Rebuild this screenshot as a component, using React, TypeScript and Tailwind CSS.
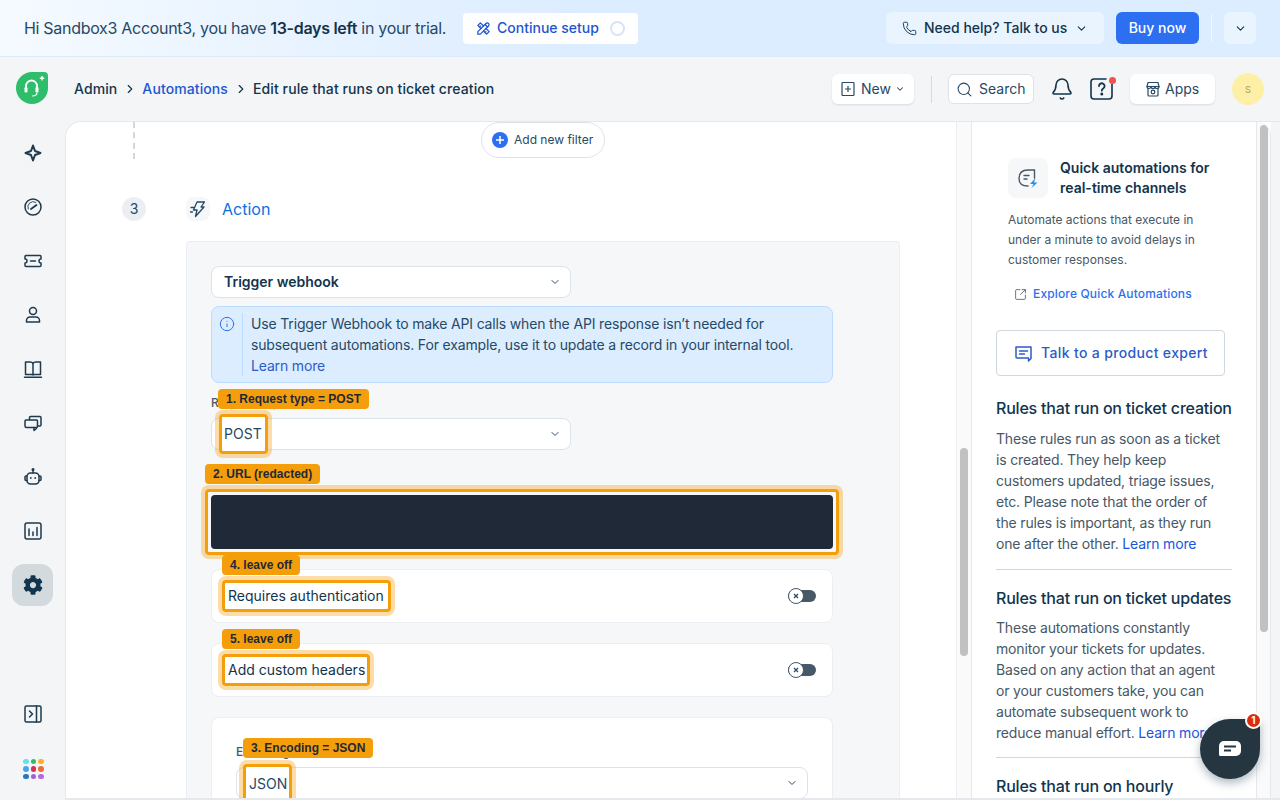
import React from "react";
import { Bell, ChevronDown, ChevronRight, Info, Phone, Search, SquareArrowOutUpRight } from "lucide-react";
import { FaCog } from "react-icons/fa";
import { TbTools } from "react-icons/tb";

const S = (p: React.SVGProps<SVGSVGElement>) => (
  <svg width="20" height="20" viewBox="0 0 20 20" fill="none" stroke="#1f3a4d" strokeWidth="1.5" strokeLinecap="round" strokeLinejoin="round" {...p} />
);

const SideIcons = [
  <S key="a"><path d="M10 2.5 L12 8 L17.5 10 L12 12 L10 17.5 L8 12 L2.5 10 L8 8 Z" strokeWidth="2" /></S>,
  <S key="b"><circle cx="10" cy="10" r="8" /><path d="M5.200 12a5.400 5.400 0 0 1 7.600-6.700" strokeWidth="0.900" /><path d="M8 12 L13.500 8" strokeWidth="1.800" /></S>,
  <S key="c"><path d="M3 4.500h14a1 1 0 0 1 1 1V8a2 2 0 0 0 0 4v2.500a1 1 0 0 1-1 1H3a1 1 0 0 1-1-1V12a2 2 0 0 0 0-4V5.500a1 1 0 0 1 1-1Z" /><path d="M7.500 10h5" /></S>,
  <S key="d"><circle cx="10" cy="6" r="3.500" /><path d="M3.500 17v-1.500a3.500 3.500 0 0 1 3.500-3.500h6a3.500 3.500 0 0 1 3.500 3.500V17Z" /></S>,
  <S key="e"><path d="M10 5v11M10 5a2.500 2.500 0 0 0-2.500-2H2.500v12.500H8a2 2 0 0 1 2 .5 2 2 0 0 1 2-.5h5.500V3h-5a2.500 2.500 0 0 0-2.500 2Z" /><path d="M1.500 18.300h17" /></S>,
  <S key="f"><path d="M6.500 6.500V4.500a1 1 0 0 1 1-1H17a1 1 0 0 1 1 1v7.500a1 1 0 0 1-1 1h-2.500" /><path d="M3 7h10.500a1 1 0 0 1 1 1v5.500a1 1 0 0 1-1 1H3.500a1.500 1.500 0 0 1-1.500-1.500V8a1 1 0 0 1 1-1Z" /><path d="M11 14.500v3l2.500-2" /></S>,
  <S key="g"><rect x="4" y="6" width="12" height="11" rx="3.500" /><path d="M10 6V3.500" /><circle cx="10" cy="2.500" r="0.800" fill="#1f3a4d" /><path d="M4 9H3a1 1 0 0 0-1 1v2.500a1 1 0 0 0 1 1h1M16 9h1a1 1 0 0 1 1 1v2.500a1 1 0 0 1-1 1h-1" /><circle cx="7.800" cy="11" r="0.900" fill="#1f3a4d" stroke="none" /><circle cx="12.200" cy="11" r="0.900" fill="#1f3a4d" stroke="none" /></S>,
  <S key="h"><rect x="2" y="2" width="16" height="16" rx="2" /><path d="M6 8v6.500M10 11v3.500M14 6.500v8" /></S>,
];

const Mark = ({ className, children }: { className: string; children?: React.ReactNode }) => (
  <div className={`absolute z-10 flex items-center rounded-[4px] border-[3px] border-[#f59e0b] bg-white shadow-[0_0_0_4px_rgba(245,158,11,0.35)] ${className}`}>{children}</div>
);

const Tag = ({ className, children }: { className: string; children: React.ReactNode }) => (
  <div className={`absolute z-20 flex h-5 items-center rounded-[4px] bg-[#f59e0b] px-2 font-['Liberation_Sans',sans-serif] text-xs font-bold whitespace-nowrap text-[#1f2937] ${className}`}>{children}</div>
);

const Toggle = () => (
  <div className="relative mr-[16px] h-[12px] w-[28px] rounded-full bg-[#475867]">
    <div className="absolute top-[-2px] left-0 flex h-4 w-4 items-center justify-center rounded-full border border-[#475867] bg-white text-[10px] leading-none text-[#264966]">
      <svg width="6" height="6" viewBox="0 0 6 6" stroke="#264966" strokeWidth="1.200"><path d="M1 1l4 4M5 1l-4 4" /></svg>
    </div>
  </div>
);

const Select = ({ className, children }: { className: string; children?: React.ReactNode }) => (
  <div className={`relative flex h-8 items-center justify-between rounded-lg border border-[#dde3e9] bg-white pr-[9px] pl-3 ${className}`}>
    {children}
    <ChevronDown size={12} strokeWidth={2} className="ml-auto text-[#264966]" />
  </div>
);

const ToggleRow = ({ label, tag, markW }: { label: string; tag: string; markW: string }) => (
  <div className="relative flex h-[54px] w-[622px] items-center justify-end rounded-lg border border-[#ebeff3] bg-white">
    <Tag className="top-[-15px] left-[10px] w-[78px]">{tag}</Tag>
    <Mark className={`top-[10px] left-[10px] h-[32px] pl-[3px] text-sm text-[#12344d] ${markW}`}>{label}</Mark>
    <Toggle />
  </div>
);

export default function App() {
  return (
    <div className="relative flex h-screen w-screen flex-col overflow-hidden bg-[#f3f5f7] font-['Inter',sans-serif] text-[#12344d]">
      {/* trial banner */}
      <div className="flex h-[57px] shrink-0 items-center border-b border-[#dbe9f6] bg-gradient-to-r from-[#f5faff] via-[#dcedff] via-45% to-[#dcedff] pr-6 pl-6">
        <span className="text-base tracking-[-0.3px] text-[#264966]">Hi Sandbox3 Account3, you have <b className="font-semibold text-[#12344d]">13-days left</b> in your trial.</span>
        <div className="ml-[17px] flex h-[31px] w-[175px] items-center rounded bg-white pl-[13px] text-sm font-medium text-[#1d55d0]">
          <TbTools size={15} className="text-[#1d55d0]" />
          <span className="ml-[6px]">Continue setup</span>
          <div className="ml-[11px] h-[15px] w-[15px] rounded-full border-[2.500px] border-[#d5e3f7]" />
        </div>
        <div className="ml-auto flex h-8 w-[218px] items-center rounded-md bg-[#e9f4ff] pl-4 text-sm font-medium text-[#12344d]">
          <Phone size={15} strokeWidth={1.5} />
          <span className="ml-[7px]">Need help? Talk to us</span>
          <ChevronDown size={13} strokeWidth={2} className="ml-[8px]" />
        </div>
        <div className="ml-3 flex h-8 w-[83px] items-center justify-center rounded-md bg-[#2c6ff0] text-sm font-medium text-white">Buy now</div>
        <div className="mx-3 h-7 w-px bg-[#eff6fd]" />
        <div className="flex h-8 w-8 items-center justify-center rounded-md bg-[#e9f4ff]"><ChevronDown size={13} strokeWidth={2} /></div>
      </div>

      {/* header */}
      <div className="flex h-[64px] shrink-0 items-center pr-4 pl-4">
        <svg width="32" height="32" viewBox="0 0 32 32" className="mb-[2px] shrink-0">
          <path d="M16 0H28a4 4 0 0 1 4 4V16A16 16 0 1 1 16 0Z" fill="#2ebd6b" />
          <path d="M10 17v-3a5.500 5.500 0 0 1 11 0v3" fill="none" stroke="#fff" strokeWidth="1.800" />
          <rect x="8.500" y="15" width="3" height="5.500" rx="1.300" fill="#fff" /><rect x="19.500" y="15" width="3" height="5.500" rx="1.300" fill="#fff" />
          <path d="M21 20.500c0 2.500-2.500 3.500-5 3.500" fill="none" stroke="#fff" strokeWidth="1.200" />
          <path d="M26 4v4.500M23.800 6.200h4.400" stroke="#fff" strokeWidth="1.400" />
        </svg>
        <div className="ml-[26px] flex items-center text-sm font-medium tracking-[0.1px]">
          <span>Admin</span>
          <ChevronRight size={14} strokeWidth={2} className="mx-[5.500px]" />
          <span className="text-[#1d55d0]">Automations</span>
          <ChevronRight size={14} strokeWidth={2} className="mx-[5.500px]" />
          <span>Edit rule that runs on ticket creation</span>
        </div>
        <div className="ml-auto flex h-[30px] w-[82px] items-center rounded-md bg-white pl-[9px] text-sm text-[#264966] shadow-[0_1px_2px_rgba(18,52,77,0.12)]">
          <svg width="14" height="16" viewBox="0 0 14 16" fill="none" stroke="#264966" strokeWidth="1.200"><rect x="1" y="1.500" width="12" height="13" rx="0.800" /><path d="M7 5v6M4 8h6" /></svg>
          <span className="ml-[6px]">New</span>
          <ChevronDown size={10} strokeWidth={2.500} className="ml-[4px]" />
        </div>
        <div className="mr-4 ml-[17px] h-[27px] w-px bg-[#d5dbe1]" />
        <div className="flex h-[30px] w-[86px] items-center rounded-md border border-[#dde3e9] bg-white pl-[7px] text-sm text-[#264966]">
          <Search size={17} strokeWidth={1.500} />
          <span className="ml-[6px]">Search</span>
        </div>
        <Bell size={24} strokeWidth={1.600} className="ml-4 text-[#12344d]" />
        <div className="relative ml-[15px] h-[26px] w-[26px]">
          <svg width="26" height="26" viewBox="0 0 26 26" fill="none" stroke="#12344d" strokeWidth="1.600" strokeLinecap="round">
            <path d="M17 3H5a3 3 0 0 0-3 3v14a3 3 0 0 0 3 3h15a3 3 0 0 0 3-3V8" />
            <path d="M10 10a2.800 2.800 0 1 1 4.200 2.500c-1 .6-1.400 1.100-1.400 2.200" strokeWidth="1.800" />
            <circle cx="12.800" cy="18" r="0.700" fill="#12344d" />
          </svg>
          <div className="absolute top-[1px] right-[-1px] h-[7px] w-[7px] rounded-full bg-[#f0534f]" />
        </div>
        <div className="ml-[15px] flex h-[30px] w-[85px] items-center rounded-md bg-white pl-4 text-sm text-[#264966] shadow-[0_1px_2px_rgba(18,52,77,0.12)]">
          <svg width="14" height="16" viewBox="0 0 14 16" fill="none" stroke="#264966" strokeWidth="1.200"><path d="M2 1.500h10l1 4H1Z" /><path d="M1 5.500a2 2 0 0 0 4 0 2 2 0 0 0 4 0 2 2 0 0 0 4 0" /><path d="M2 7.500V14a1 1 0 0 0 1 1h8a1 1 0 0 0 1-1V7.500" /><circle cx="7" cy="11" r="1.800" /></svg>
          <span className="ml-[5px]">Apps</span>
        </div>
        <div className="ml-[17px] flex h-8 w-8 items-center justify-center rounded-full bg-[#fdf0a6] text-xs text-[#b5ab76]">s</div>
      </div>

      {/* body */}
      <div className="flex min-h-0 flex-1">
        <div className="flex w-[65px] shrink-0 flex-col items-center pt-[22px]">
          {SideIcons.map((icon, i) => (
            <div key={i} className="mb-[34px] flex h-5 w-5 items-center justify-center">{icon}</div>
          ))}
          <div className="mt-[-11px] flex h-[42px] w-[41px] items-center justify-center rounded-xl bg-[#d3dade]"><FaCog size={20} className="text-[#12344d]" /></div>
          <div className="mt-auto mb-[76px] flex h-5 w-5 items-center justify-center">
            <S><rect x="2" y="2" width="16" height="16" rx="1.500" /><path d="M13.500 2v16M6.500 7l3 3-3 3" /></S>
          </div>
          <div className="absolute bottom-[21px] left-[23px] grid grid-cols-3 gap-[2px]">
            {["#5ee3f2", "#2ebd6b", "#fdb022", "#4aa3ec", "#d9304f", "#f26a2e", "#2c74c4", "#a25fd6", "#b868d9"].map((c) => (
              <div key={c} className="h-[5.500px] w-[5.500px] rounded-full" style={{ background: c }} />
            ))}
          </div>
        </div>

        {/* main */}
        <div className="flex min-w-0 flex-1 overflow-hidden rounded-tl-2xl border-t border-b-2 border-l border-[#e5e9ee] bg-white">
          <div className="w-[890px] shrink-0 overflow-hidden">
            <div className="relative flex h-[37px] items-start">
              <div className="ml-[67px] h-[37px] border-l-2 border-dashed border-[#cfd7df]" />
              <div className="absolute top-0 left-[415px] flex h-9 w-[124px] items-center rounded-full border border-[#dde3e9] bg-white pl-[10px] text-xs text-[#264966]">
                <div className="flex h-4 w-4 items-center justify-center rounded-full bg-[#2c6ff0]">
                  <svg width="10" height="10" viewBox="0 0 10 10" stroke="#fff" strokeWidth="1.500"><path d="M5 1v8M1 5h8" /></svg>
                </div>
                <span className="ml-[6px]">Add new filter</span>
              </div>
            </div>

            <div className="mt-[38px] flex h-6 items-center pl-[56px]">
              <div className="flex h-6 w-6 items-center justify-center rounded-full bg-[#ebeff3] text-sm text-[#264966]">3</div>
              <div className="ml-[40px] flex h-6 w-6 items-center justify-center rounded-lg bg-[#f5f7f9]">
                <svg width="18" height="18" viewBox="0 0 18 18" fill="none" stroke="#264966" strokeWidth="1.300" strokeLinejoin="round" strokeLinecap="round"><path d="M8 2h7.500l-3.500 5h3L6.500 16.500 8 10H4.500Z" /><path d="M2 7.500h3M1.500 12h2" /></svg>
              </div>
              <span className="ml-3 text-base text-[#0b72e0]">Action</span>
            </div>

            <div className="mt-5 ml-[120px] w-[714px] rounded-t border border-b-0 border-[#ebeff3] bg-[#f5f7f9] px-6 pt-6 text-sm">
              <Select className="w-[360px] font-semibold">Trigger webhook</Select>
              <div className="mt-2 flex h-[77px] w-[622px] rounded-lg border border-[#bbdcfe] bg-[#dcedff] py-[6px] pl-[7px] tracking-[-0.16px] text-[#264966]">
                <Info size={16} strokeWidth={1.500} className="mt-[3px] shrink-0 text-[#2c6ff0]" />
                <div className="ml-[7px] border-l border-[#bbdcfe] pl-2 leading-[21px]">
                  Use Trigger Webhook to make API calls when the API response isn’t needed for subsequent automations. For example, use it to update a record in your internal tool.{" "}
                  <span className="text-[#2c5cc5]">Learn more</span>
                </div>
              </div>

              <div className="relative mt-[11px] h-[18px] text-xs leading-[18px] font-medium text-[#475867]">
                Request type
                <Tag className="top-[-5px] left-[7px]">1. Request type = POST</Tag>
              </div>
              <Select className="mt-[6px] w-[360px]">
                <Mark className="top-[-5px] left-[7px] h-[40px] w-[49px] pl-[2px] text-[#264966]">POST</Mark>
              </Select>

              <div className="relative mt-[45px] h-[54px] w-[622px] rounded bg-[#1f2937]">
                <Tag className="top-[-31px] left-[-6px]">2. URL (redacted)</Tag>
                <div className="absolute -inset-[6px] rounded-[4px] border-[3px] border-[#f59e0b] shadow-[0_0_0_4px_rgba(245,158,11,0.35)]" />
              </div>

              <div className="mt-5"><ToggleRow label="Requires authentication" tag="4. leave off" markW="w-[169px]" /></div>
              <div className="mt-5"><ToggleRow label="Add custom headers" tag="5. leave off" markW="w-[148px]" /></div>

              <div className="mt-5 h-[90px] w-[622px] rounded-t-lg border border-b-0 border-[#ebeff3] bg-white px-6 pt-[25px]">
                <div className="relative h-[18px] text-xs leading-[18px] font-medium text-[#475867]">
                  Encoding
                  <Tag className="top-[-5px] left-[7px]">3. Encoding = JSON</Tag>
                </div>
                <Select className="mt-[6px] w-[572px]">
                  <Mark className="top-[-4px] left-[6px] h-[40px] w-[49px] pl-[3px] text-[#264966]">JSON</Mark>
                </Select>
              </div>
            </div>
          </div>

          <div className="w-[15px] shrink-0 border-l border-[#ebeff3] bg-[#fafafa] pt-[326px] pl-[3px]">
            <div className="h-[208px] w-2 rounded-full bg-[#c1c1c1]" />
          </div>

          <div className="w-[286px] shrink-0 overflow-hidden border-x border-[#e5e9ee] pt-[36px] pl-6">
            <div className="flex pl-3">
              <div className="flex h-10 w-10 shrink-0 items-center justify-center rounded-lg bg-[#f5f7f9]">
                <svg width="24" height="24" viewBox="0 0 24 24" fill="none" stroke="#475867" strokeWidth="1.400" strokeLinecap="round"><path d="M12 20c-5 0-9-1.500-9-7.500C3 7 6 4 12 4h6.500v8" /><path d="M8 9.500h5M8 13h3" /><path d="M19.500 12 L14 18h3.500L15.500 22 L21.500 16.500h-3.500Z" fill="#2c8af0" stroke="none" /></svg>
              </div>
              <div className="ml-3 w-[170px] text-sm leading-5 font-semibold">Quick automations for real-time channels</div>
            </div>
            <div className="mt-3 ml-3 w-[216px] text-xs leading-5 text-[#475867]">Automate actions that execute in under a minute to avoid delays in customer responses.</div>
            <div className="mt-4 ml-[18px] flex items-center text-xs font-medium tracking-[0.15px] text-[#2c6ff0]">
              <SquareArrowOutUpRight size={13} strokeWidth={1.500} className="text-[#475867]" />
              <span className="ml-[6px]">Explore Quick Automations</span>
            </div>
            <div className="mt-7 flex h-[46px] w-[229px] items-center rounded border border-[#cfd7df] bg-white pl-[17px] text-sm font-medium tracking-[0.35px] text-[#2c5cc5]">
              <svg width="19" height="19" viewBox="0 0 19 19" fill="none" stroke="#2c5cc5" strokeWidth="1.500" strokeLinejoin="round" strokeLinecap="round"><path d="M2 3h15v11.500l-2.500 2.500v-3H3a1 1 0 0 1-1-1Z" /><path d="M5.500 7h8M5.500 10h5" /></svg>
              <span className="ml-[8px]">Talk to a product expert</span>
            </div>
            <div className="w-[236px] text-sm leading-[21px] tracking-[-0.17px] text-[#475867]">
              <h3 className="mt-5 text-base leading-6 font-medium tracking-[-0.2px] whitespace-nowrap text-[#12344d]">Rules that run on ticket creation</h3>
              <p className="mt-2 w-[230px]">These rules run as soon as a ticket is created. They help keep customers updated, triage issues, etc. Please note that the order of the rules is important, as they run one after the other. <span className="text-[#1a56db]">Learn more</span></p>
              <div className="mt-[15px] h-px bg-[#cfd7df]" />
              <h3 className="mt-4 text-base leading-6 font-medium tracking-[-0.2px] whitespace-nowrap text-[#12344d]">Rules that run on ticket updates</h3>
              <p className="mt-[7px] w-[230px]">These automations constantly monitor your tickets for updates. Based on any action that an agent or your customers take, you can automate subsequent work to reduce manual effort. <span className="text-[#1a56db]">Learn more</span></p>
              <div className="mt-[14px] h-px bg-[#cfd7df]" />
              <h3 className="mt-4 text-base leading-6 font-medium tracking-[-0.2px] text-[#12344d]">Rules that run on hourly triggers</h3>
            </div>
          </div>

          <div className="w-[14px] shrink-0 overflow-hidden rounded-tr-2xl border-r border-[#e5e9ee] bg-[#fafafa] pt-[3px] pl-[3px]">
            <div className="h-[507px] w-2 rounded-full bg-[#c1c1c1]" />
          </div>
          <div className="flex-1 bg-[#f3f5f7]" />
        </div>
      </div>

      {/* chat widget */}
      <div className="absolute right-5 bottom-[21px] flex h-[60px] w-[60px] items-center justify-center rounded-full rounded-tr-md bg-[#263640] shadow-[0_4px_10px_rgba(18,52,77,0.35)]">
        <svg width="24" height="18" viewBox="0 0 24 18"><path d="M6 1h12a5 5 0 0 1 5 5v5a5 5 0 0 1-5 5H2.500A1.500 1.500 0 0 1 1 14.500V6a5 5 0 0 1 5-5Z" fill="#fff" /><path d="M6 6.500h12M6 10.500h7" stroke="#263640" strokeWidth="2" /></svg>
        <div className="absolute top-[-7px] right-[-2px] flex h-[17px] w-[17px] items-center justify-center rounded-full border-2 border-white bg-[#dd2b0c] text-[10px] font-bold text-white">1</div>
      </div>
    </div>
  );
}
